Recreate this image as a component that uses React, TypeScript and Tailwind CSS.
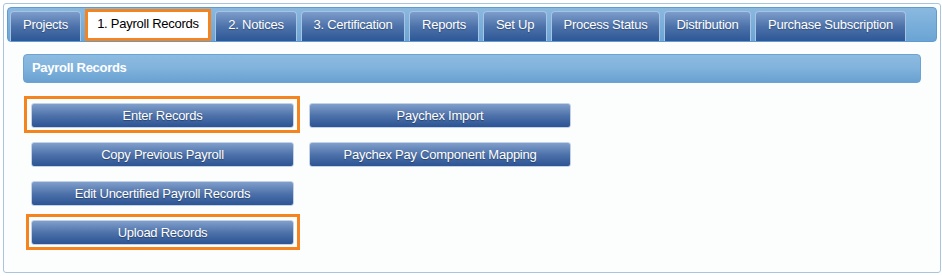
import React from 'react';

const tabs = [
  { label: 'Projects', w: 'w-[71px]' },
  { label: '1. Payroll Records', w: 'w-[126px]', active: true },
  { label: '2. Notices', w: 'w-[82px]' },
  { label: '3. Certification', w: 'w-[104px]' },
  { label: 'Reports', w: 'w-[70px]' },
  { label: 'Set Up', w: 'w-[64px]' },
  { label: 'Process Status', w: 'w-[109px]' },
  { label: 'Distribution', w: 'w-[87px]' },
  { label: 'Purchase Subscription', w: 'w-[151px]' },
];

const ActionButton: React.FC<{ label: string }> = ({ label }) => (
  <button
    type="button"
    className="h-[25px] w-full rounded-[3px] border border-[#c3d2e6] bg-gradient-to-b from-[#819fcb] via-[#4e72aa] to-[#2c5494] text-[13px] leading-none tracking-[-0.25px] text-white [text-shadow:0_1px_1px_rgba(0,0,0,0.35)]"
  >
    {label}
  </button>
);

const App: React.FC = () => {
  return (
    <div className="h-[276px] w-[942px] bg-white p-[3px] font-['Liberation_Sans',Arial,sans-serif]">
      <div className="h-[270px] w-[938px] rounded-[3px] border border-[#aac4dd] bg-[#fcfefe] p-[3px]">
        {/* Tab bar */}
        <div className="flex h-[35px] items-end gap-[4px] rounded-[4px] border border-[#5f9bd0] bg-gradient-to-b from-[#8ab9e0] to-[#6aa4d4] pl-[2px] pr-[2px]">
          {tabs.map((tab) =>
            tab.active ? (
              <div
                key={tab.label}
                className={`${tab.w} flex h-[32px] items-center justify-center border-[3px] border-[#f5841f] bg-white pb-[2px] text-[13px] tracking-[-0.25px] text-black`}
              >
                {tab.label}
              </div>
            ) : (
              <div
                key={tab.label}
                className={`${tab.w} flex h-[30px] items-center justify-center rounded-t-[4px] border border-b-0 border-[#a9c3e2] bg-gradient-to-b from-[#7d9dcb] via-[#4d72aa] to-[#2d5796] pb-[3px] text-[13px] tracking-[-0.25px] text-white [text-shadow:0_1px_1px_rgba(0,0,0,0.3)]`}
              >
                {tab.label}
              </div>
            )
          )}
        </div>

        {/* Content */}
        <div className="px-[16px] pt-[12px]">
          <div className="flex h-[29px] items-center rounded-[4px] border border-[#6aa3d4] bg-gradient-to-b from-[#8dbbe0] via-[#80b2dc] to-[#68a1d1] pb-[1px] pl-[8px] text-[13px] font-bold tracking-[-0.3px] text-white">
            Payroll Records
          </div>

          <div className="grid grid-cols-[263px_262px] gap-x-[15px] gap-y-[14px] pl-[8px] pt-[20px]">
            <div className="relative">
              <ActionButton label="Enter Records" />
              <div className="absolute left-[-7px] right-[-6px] top-[-7px] bottom-[-5px] border-[3px] border-[#f5841f]" />
            </div>
            <ActionButton label="Paychex Import" />
            <ActionButton label="Copy Previous Payroll" />
            <ActionButton label="Paychex Pay Component Mapping" />
            <ActionButton label="Edit Uncertified Payroll Records" />
            <div />
            <div className="relative">
              <ActionButton label="Upload Records" />
              <div className="absolute left-[-5px] right-[-6px] top-[-6px] bottom-[-5px] border-[3px] border-[#f5841f]" />
            </div>
          </div>
        </div>
      </div>
    </div>
  );
};

export default App;
